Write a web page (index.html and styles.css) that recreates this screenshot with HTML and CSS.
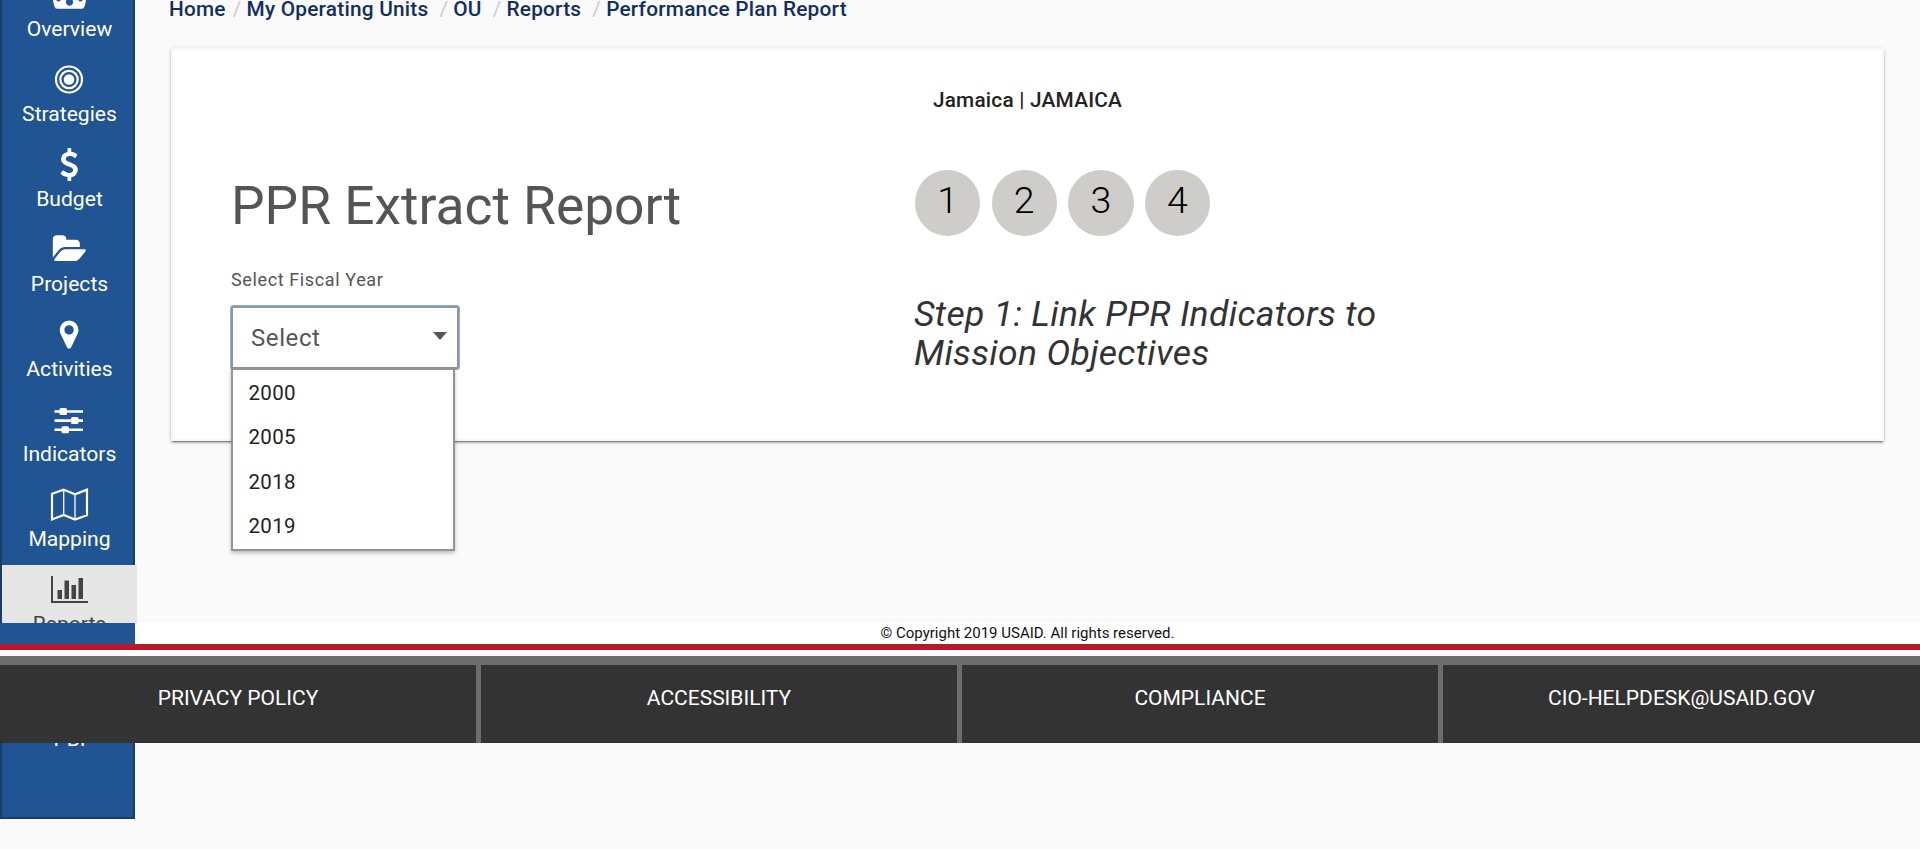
FILE: index.html
```html
<!DOCTYPE html>
<html lang="en">
<head>
<meta charset="utf-8">
<title>Performance Plan Report</title>
<link rel="stylesheet" href="styles.css">
</head>
<body>
<div class="layout">
  <nav class="sidebar">
    <a class="nav-item">
      <svg class="nav-icon" viewBox="0 0 41 40"><path fill-rule="evenodd" d="M4 23a16.500 16.500 0 0 1 33 0c0 4-.8 7-2 9.500-.4.800-1 1.200-2 1.200H8c-1 0-1.600-.4-2-1.200C4.800 30 4 27 4 23zm16.500 0.500a3.600 3.600 0 1 0 .01 0zM9.500 22a2.300 2.300 0 1 0 .01 0zM31.500 22a2.300 2.300 0 1 0 .01 0z"/></svg>
      <span class="nav-label">Overview</span>
    </a>
    <a class="nav-item">
      <svg class="nav-icon" viewBox="0 0 41 40"><g class="line"><circle cx="20" cy="19.500" r="13"/><circle cx="20" cy="19.500" r="8.700"/></g><circle cx="20" cy="19.500" r="5.300"/></svg>
      <span class="nav-label">Strategies</span>
    </a>
    <a class="nav-item">
      <svg class="nav-icon" viewBox="0 0 41 40"><g transform="translate(10.800 3) scale(.0184)"><path d="M978 1185q0 153-99.500 263.500t-258.500 136.500v175q0 14-9 23t-23 9h-135q-13 0-22.500-9.500t-9.500-22.500v-175q-66-9-127.500-31t-101.500-44.500-74-48-46.500-37.500-17.500-18q-17-21-2-41l103-135q7-10 23-12 15-2 24 9l2 2q113 99 243 125 37 8 74 8 81 0 142.500-43t61.500-122q0-28-15-53t-33.500-42-58.500-37.500-66-32-80-32.500q-39-16-61.500-25t-61.500-26.500-62.500-31-56.500-35.500-53.500-42.500-43.500-49-35.500-58-21-66.500-8.500-78q0-138 98-242t255-134v-180q0-13 9.500-22.500t22.500-9.500h135q14 0 23 9t9 23v176q57 6 110.500 23t87 33.500 63.500 37.500 39 29 15 14q17 18 5 38l-81 146q-8 15-23 16-14 3-27-7-3-3-14.500-12t-39-26.500-58.500-32-74.500-26-85.500-11.500q-95 0-155 43t-60 111q0 26 8.500 48t29.500 41.500 39.500 33 56 31 60.500 27 70 27.500q53 20 81 31.500t76 35 75.500 42.500 62 50 53 63.500 31.500 76.500 13 94z"/></g></svg>
      <span class="nav-label">Budget</span>
    </a>
    <a class="nav-item">
      <svg class="nav-icon" viewBox="0 0 41 40"><g transform="translate(2.700 2.800) scale(.0176 .0184)"><path d="M1943 952q0 31-31 66l-336 396q-43 51-120.500 86.500t-143.500 35.500h-1088q-34 0-60.500-13t-26.500-43q0-31 31-66l336-396q43-51 120.500-86.500t143.500-35.500h1088q34 0 60.500 13t26.500 43zm-343-344v160h-832q-94 0-197 47.500t-164 119.500l-337 396-5 6q0-4-.5-12.500t-.5-12.500v-960q0-92 66-158t158-66h320q92 0 158 66t66 158v32h544q92 0 158 66t66 158z"/></g></svg>
      <span class="nav-label">Projects</span>
    </a>
    <a class="nav-item">
      <svg class="nav-icon" viewBox="0 0 41 40"><g transform="translate(10.700 3.200) scale(.0183)"><path d="M768 640q0-106-75-181t-181-75-181 75-75 181 75 181 181 75 181-75 75-181zm256 0q0 109-33 179l-364 774q-16 33-47.500 52t-67.500 19-67.500-19-46.500-52l-365-774q-33-70-33-179 0-212 150-362t362-150 362 150 150 362z"/></g></svg>
      <span class="nav-label">Activities</span>
    </a>
    <a class="nav-item">
      <svg class="nav-icon" viewBox="0 0 41 40"><path d="M5.500 10.200h28.500v2.600H5.500zM5.500 19.300h28.500v2.600H5.500zM5.500 28.500h28.500v2.600H5.500z"/><rect x="10.500" y="8" width="7.500" height="7" rx="1.500"/><rect x="22" y="17.100" width="7.500" height="7" rx="1.500"/><rect x="12.500" y="26.300" width="7.500" height="7" rx="1.500"/></svg>
      <span class="nav-label">Indicators</span>
    </a>
    <a class="nav-item">
      <svg class="nav-icon" viewBox="0 0 41 40"><path class="line" d="M3 8.700 14.700 4.700 26 9.300 38 4.700V30.300L26 34.500 14.700 29.900 3 34.500z"/><path class="thin" d="M14.700 4.700v25.200M26 9.300v25.200"/></svg>
      <span class="nav-label">Mapping</span>
    </a>
    <a class="nav-item active">
      <svg class="nav-icon" viewBox="0 0 41 40"><path d="M2 6h2v25h35v2H2zM8.500 20H13v9H8.500zM15.500 10.500H20V29h-4.500zM22.500 15H27v14h-4.500zM29.500 8H34v21h-4.500z"/></svg>
      <span class="nav-label">Reports</span>
    </a>
    <a class="nav-item tall">
      <span class="nav-label">PBI</span>
    </a>
  </nav>

  <main class="content">
    <div class="breadcrumbs"><a>Home</a><i>/</i><a class="wide">My Operating Units</a><i>/</i><a class="wide">OU</a><i>/</i><a class="wide">Reports</a><i>/</i><a>Performance Plan Report</a></div>

    <section class="card">
      <div class="unit">Jamaica | JAMAICA</div>
      <div class="columns">
        <div class="left">
          <h1 class="title">PPR Extract Report</h1>
          <div class="field-label">Select Fiscal Year</div>
          <div class="select">
            <span class="select-value">Select</span>
            <svg class="caret" viewBox="0 0 14 8"><path d="M0 0h14L7 8z"/></svg>
            <div class="menu">
              <div class="option">2000</div>
              <div class="option">2005</div>
              <div class="option">2018</div>
              <div class="option">2019</div>
            </div>
          </div>
        </div>
        <div class="right">
          <div class="steps">
            <span class="step">1</span>
            <span class="step">2</span>
            <span class="step">3</span>
            <span class="step">4</span>
          </div>
          <h2 class="step-title">Step 1: Link PPR Indicators to<br>Mission Objectives</h2>
        </div>
      </div>
    </section>
  </main>
</div>

<footer class="footer">
  <div class="copyright"><span>© Copyright 2019 USAID. All rights reserved.</span></div>
  <div class="stripe"></div>
  <div class="links">
    <a class="link">PRIVACY POLICY</a>
    <a class="link">ACCESSIBILITY</a>
    <a class="link">COMPLIANCE</a>
    <a class="link">CIO-HELPDESK@USAID.GOV</a>
  </div>
</footer>
</body>
</html>
```
FILE: styles.css
```css
* { box-sizing: border-box; }
html, body { margin: 0; height: 849px; overflow: hidden; }
body {
  background: #fafafa;
  font-family: Roboto, sans-serif;
  color: #222;
  position: relative;
}
.layout { display: flex; align-items: flex-start; }

.sidebar {
  flex: none;
  width: 135px;
  height: 851px;
  margin-top: -32px;
  border: 2px solid #193c6c;
  background: #205493;
}
.nav-item {
  display: flex;
  flex-direction: column;
  align-items: center;
  width: 135px;
  height: 85px;
  padding-top: 5px;
  color: #fff;
}
.nav-icon { width: 41px; height: 40px; fill: currentColor; flex: none; }
.nav-icon .line { fill: none; stroke: currentColor; stroke-width: 2.2; }
.nav-icon .thin { fill: none; stroke: currentColor; stroke-width: 1.3; }
.nav-label { font-size: 21.1px; line-height: 28px; }
.nav-item.active { background: #e6e6e6; color: #444; position: relative; }
.nav-item.tall { height: 115px; justify-content: flex-end; padding-bottom: 12px; }

.content { flex: 1; padding: 0 36px; }
.breadcrumbs {
  display: flex;
  margin-left: -2px;
  height: 48px;
  font-size: 20.8px;
  line-height: 18px;
  font-weight: 500;
  letter-spacing: .23px;
  color: #112e63;
}
.breadcrumbs i { color: #ccc; font-style: normal; font-weight: 400; margin: 0 5px 0 7px; }
.breadcrumbs .wide + i { margin-left: 11px; }

.card {
  width: 1713px;
  height: 393px;
  padding: 38px 58px 0;
  border: 2px solid #f7f7f7;
  background: #fff;
  box-shadow: 0 3px 1px -2px rgba(0,0,0,.3), 0 2px 2px 0 rgba(0,0,0,.2), 0 1px 5px 0 rgba(0,0,0,.12);
}
.unit { text-align: center; font-size: 20.8px; line-height: 24px; font-weight: 500; letter-spacing: .22px; }
.columns { display: flex; }
.left { width: 684px; padding-top: 61px; }
.title { margin: 0; font-size: 53.3px; line-height: 66px; font-weight: 400; color: #555; }
.field-label { margin-top: 29px; font-size: 18px; line-height: 24px; letter-spacing: .62px; color: #555; }
.select {
  position: relative;
  display: flex;
  align-items: center;
  justify-content: space-between;
  width: 228px;
  height: 63px;
  margin: 14px 0 0 0;
  padding: 0 10px 0 18px;
  border: 2px solid #949494;
  border-radius: 2px;
  box-shadow: 0 0 0 1px #86b0f4;
  color: #555;
}
.select-value { font-size: 24px; line-height: 30px; letter-spacing: .6px; }
.caret { width: 14px; height: 8px; margin-top: -3px; fill: #555; }
.menu {
  position: absolute;
  left: -2px;
  top: 60px;
  width: 224px;
  height: 183px;
  padding: 0;
  border: 2px solid #949494;
  background: #fff;
  box-shadow: 0 2px 4px rgba(0,0,0,.25);
}
.option { height: 44.3px; padding-left: 15.500px; font-size: 20.5px; line-height: 46px; letter-spacing: .3px; color: #222; }
.right { padding-top: 58px; }
.steps { display: flex; gap: 11.200px; }
.step {
  width: 65.400px;
  height: 66px;
  border-radius: 50%;
  background: #cfcdc9;
  text-align: center;
  font-size: 37.5px;
  line-height: 61px;
  font-weight: 300;
  color: #000;
}
.step-title { margin: 59px 0 0 -1px; font-size: 35.5px; line-height: 39.3px; letter-spacing: .34px; font-weight: 400; font-style: italic; color: #333; white-space: nowrap; }

/* The footer lies over the lower part of the sidebar. */
.footer { position: absolute; left: 0; top: 623px; width: 1920px; }
.copyright {
  height: 21px;
  padding-left: 135px;
  background: linear-gradient(to right, #205493 135px, #fff 135px);
  text-align: center;
  font-size: 15px;
  line-height: 20px;
  color: #111;
}
.stripe { height: 21px; background: linear-gradient(#ba172b 6px, #fff 6px 12px, #6d6d6d 12px); }
.links { display: grid; grid-template-columns: 481px 481px 481px 1fr; height: 78px; background: #333; }
.link { border-right: 5px solid #6d6d6d; padding-top: 20px; text-align: center; font-size: 21px; line-height: 26px; color: #fff; }
.link:last-child { border-right: 0; }
```
